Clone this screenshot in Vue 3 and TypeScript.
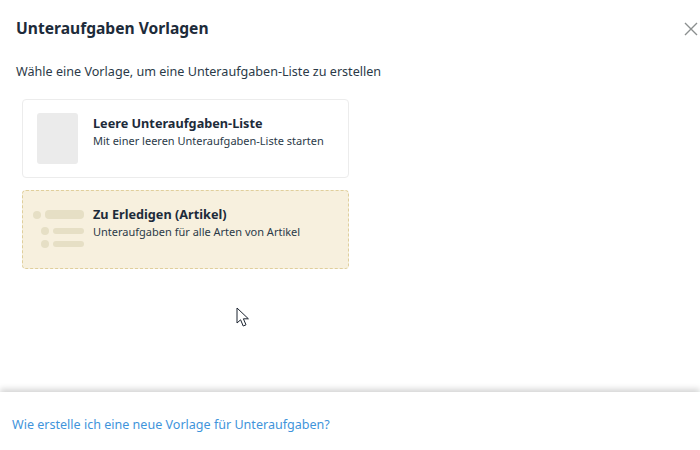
<script setup lang="ts">
interface Row { w: number; h: number }
const rows: Row[] = [
  { w: 39, h: 9 },
  { w: 31, h: 6 },
  { w: 31, h: 6 },
]
</script>

<template>
  <div class="modal">
    <main class="body">
      <header class="head">
        <h1 class="title">Unteraufgaben Vorlagen</h1>
        <button class="close" aria-label="Schließen">
          <svg width="14" height="14" viewBox="0 0 14 14">
            <path d="M1 1L13 13M13 1L1 13" stroke="#8b8f8f" stroke-width="1.4" fill="none" />
          </svg>
        </button>
      </header>
      <p class="intro">Wähle eine Vorlage, um eine Unteraufgaben-Liste zu erstellen</p>
      <div class="cards">
        <div class="card plain">
          <div class="thumb"></div>
          <div class="text">
            <div class="name">Leere Unteraufgaben-Liste</div>
            <div class="desc">Mit einer leeren Unteraufgaben-Liste starten</div>
          </div>
        </div>
        <div class="card todo">
          <div class="art">
            <div v-for="(r, i) in rows" :key="i" class="art-row">
              <span class="dot"></span>
              <span class="bar" :style="{ width: r.w + 'px', height: r.h + 'px' }"></span>
            </div>
          </div>
          <div class="text">
            <div class="name">Zu Erledigen (Artikel)</div>
            <div class="desc">Unteraufgaben für alle Arten von Artikel</div>
          </div>
        </div>
      </div>
      <svg class="cursor" width="14" height="21" viewBox="0 0 14 21">
        <path d="M1 1V16L4.6 12.8L7.2 19L10 17.8L7.4 11.8H12.4Z" fill="#fff" stroke="#1c2430" stroke-width="1" stroke-linejoin="miter" />
      </svg>
    </main>
    <footer class="foot">
      <a class="link">Wie erstelle ich eine neue Vorlage für Unteraufgaben?</a>
    </footer>
  </div>
</template>

<style scoped>
.modal {
  width: 700px;
  height: 450px;
  display: flex;
  flex-direction: column;
  background: #fff;
  font-family: "Noto Sans", "Open Sans", sans-serif;
  color: #1d2b3a;
  overflow: hidden;
}
.body {
  position: relative;
  flex: 1;
  padding: 16px 0 0 16px;
}
.head {
  display: flex;
  justify-content: space-between;
  align-items: center;
  height: 25px;
}
.title {
  margin: 0;
  font-size: 15.6px;
  font-weight: 700;
  line-height: 25px;
}
.close {
  border: 0;
  padding: 0;
  margin-right: 2px;
  background: none;
  width: 14px;
  height: 14px;
  display: flex;
}
.intro {
  margin: 21px 0 0;
  font-size: 12.6px;
  line-height: 20px;
  color: #2b3a48;
}
.cards {
  margin: 17px 0 0 6px;
  width: 327px;
  display: flex;
  flex-direction: column;
  gap: 12px;
}
.card {
  box-sizing: border-box;
  height: 79px;
  border-radius: 4px;
  display: flex;
  padding: 13px 0 0 14px;
}
.plain {
  border: 1px solid #ececec;
}
.todo {
  background: #f7f0de;
  border: 1px dashed #e0cf9c;
  padding-left: 10px;
}
.thumb {
  width: 41px;
  height: 51px;
  border-radius: 3px;
  background: #ebebeb;
}
.art {
  width: 60px;
  flex: none;
  padding-top: 6px;
  display: flex;
  flex-direction: column;
  gap: 5px;
  box-sizing: border-box;
}
.art-row {
  display: flex;
  align-items: center;
  gap: 4px;
  width: 51px;
  justify-content: flex-end;
}
.art-row:first-child {
  margin-bottom: 3px;
}
.dot {
  width: 8px;
  height: 8px;
  border-radius: 50%;
  background: #e6dfc5;
}
.bar {
  border-radius: 4px;
  background: #e6dfc5;
}
.text {
  margin-left: 15px;
  padding-top: 1px;
}
.todo .text {
  margin-left: 0;
}
.name {
  font-size: 12.7px;
  font-weight: 700;
  line-height: 18px;
  color: #1d2b3a;
}
.desc {
  font-size: 11px;
  line-height: 18px;
  color: #2b3a48;
}
.cursor {
  position: absolute;
  left: 236px;
  top: 307px;
}
.foot {
  height: 58px;
  flex: none;
  display: flex;
  align-items: center;
  padding: 6px 0 0 12px;
  box-sizing: border-box;
  background: #fff;
  box-shadow: 0 -3px 6px rgba(0, 0, 0, 0.17);
  position: relative;
}
.link {
  font-size: 12.55px;
  color: #3f94db;
}
</style>
